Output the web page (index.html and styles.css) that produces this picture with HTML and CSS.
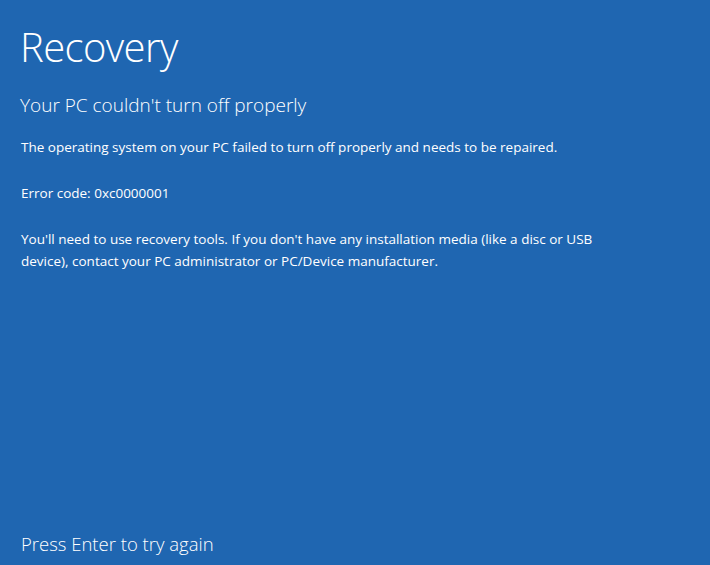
FILE: index.html
```html
<!DOCTYPE html>
<html lang="en">
<head>
<meta charset="UTF-8">
<meta name="viewport" content="width=device-width, initial-scale=1.0">
<title>Recovery</title>
<link rel="stylesheet" href="styles.css">
</head>
<body>
<div class="screen">
  <h1 class="title">Recovery</h1>
  <h2 class="subtitle">Your PC couldn't turn off properly</h2>
  <p class="msg">The operating system on your PC failed to turn off properly and needs to be repaired.</p>
  <p class="msg">Error code: 0xc0000001</p>
  <p class="msg">You'll need to use recovery tools. If you don't have any installation media (like a disc or USB device), contact your PC administrator or PC/Device manufacturer.</p>
  <div class="footer">Press Enter to try again</div>
</div>
</body>
</html>
```

FILE: styles.css
```css
body {
  margin: 0;
  overflow: hidden;
  background: #1f66b1;
  color: white;
  font-family: 'Open Sans', sans-serif;
}
.screen {
  display: flex;
  flex-direction: column;
  height: 100vh;
  box-sizing: border-box;
  padding: 22px 20px 8px 20px;
}
.title {
  margin: 0;
  font-size: 40px;
  font-weight: 300;
  line-height: 50px;
  letter-spacing: -0.6px;
}
.subtitle {
  margin: 20px 0 18px 0;
  font-size: 19px;
  font-weight: 300;
  line-height: 26px;
}
.msg {
  margin: 0 0 24px 1px;
  max-width: 610px;
  font-size: 13.5px;
  line-height: 22px;
}
.footer {
  margin-top: auto;
  margin-left: 1px;
  font-size: 18.5px;
  font-weight: 300;
  line-height: 26px;
}
```
